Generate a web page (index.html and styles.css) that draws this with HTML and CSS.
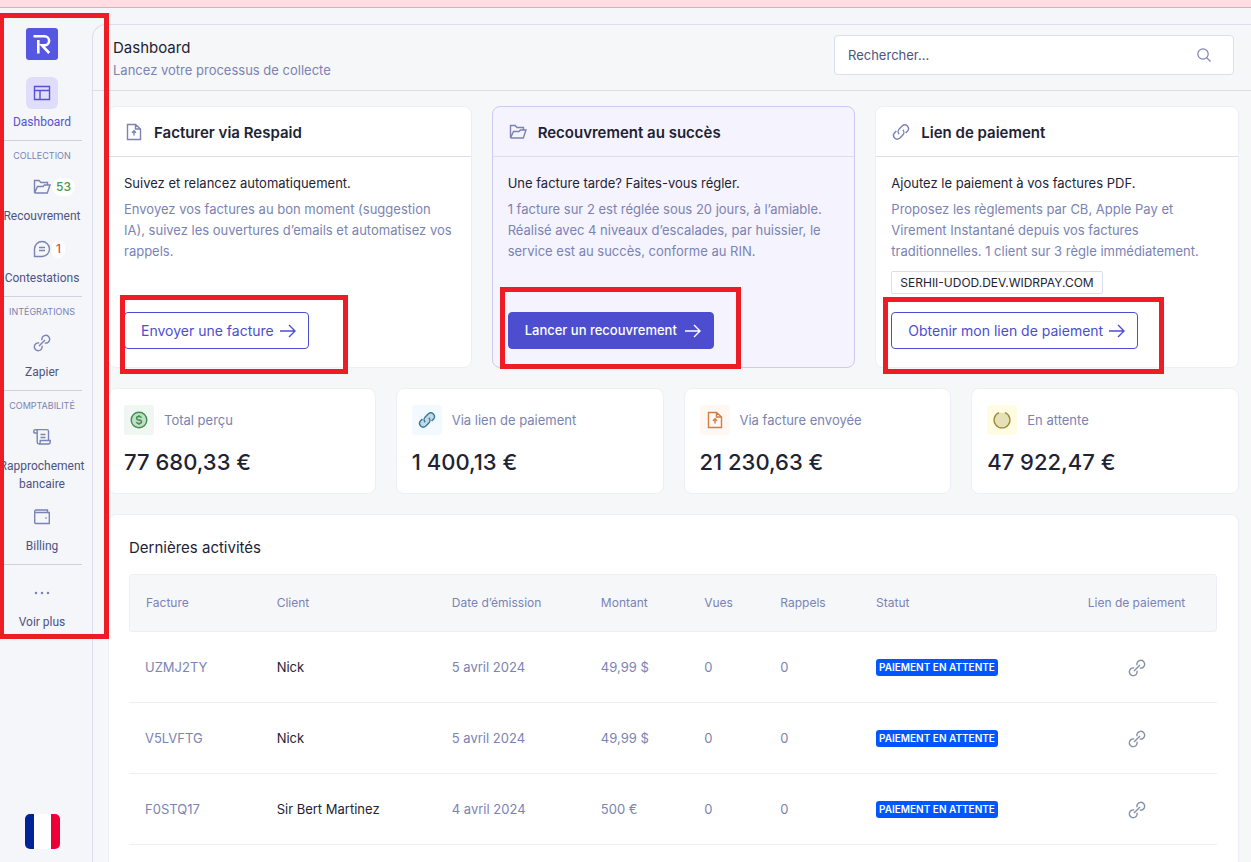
FILE: index.html
```html
<!DOCTYPE html>
<html lang="fr">
<head>
<meta charset="utf-8">
<meta name="viewport" content="width=device-width, initial-scale=1">
<title>Dashboard</title>
<link rel="stylesheet" href="styles.css">
</head>
<body>
<svg class="sprite" aria-hidden="true">
  <symbol id="i-folder" viewBox="0 0 18 16"><path d="M1.500 14V1.500H6l2 2h6.500V6M1.500 14h12.800L17 6h-5.500L10 7.500H4.500L1.500 14"/></symbol>
  <symbol id="i-doc" viewBox="0 0 18 18"><path d="M2.500 1.500h8l5 4.500V16.500h-13ZM10.500 1.500V6h5M9 12.500V8M7 9.800 9 7.800l2 2"/></symbol>
  <symbol id="i-link" viewBox="0 0 18 18"><path d="M7.200 11.200a3.700 3.700 0 0 1 0-5.200l3.200-3.200a3.700 3.700 0 0 1 5.200 5.200l-2 2M10.800 6.800a3.700 3.700 0 0 1 0 5.200l-3.200 3.200a3.700 3.700 0 0 1-5.200-5.200l2-2"/></symbol>
  <symbol id="i-chain" viewBox="0 0 18 18"><path d="M6 12l6-6M9 6.200a3.900 3.900 0 1 1 2.800 2.800M9 11.800a3.900 3.900 0 1 1-2.800-2.800"/></symbol>
  <symbol id="i-arrow" viewBox="0 0 16 14"><path d="M0 7h15M9 1l6 6-6 6"/></symbol>
</svg>
<div class="banner"></div>
<div class="app">
  <nav class="sidebar">
    <a class="logo" href="#" aria-label="Respaid">
      <svg viewBox="0 0 32 32"><path d="M7.500 8.200H18.500a4.600 4.600 0 0 1 0 9.200H16l7.200 7.600M12.300 12v13.500"/></svg>
    </a>
    <a class="item active" href="#">
      <span class="ico"><svg viewBox="0 0 18 18"><path d="M1.500 2.500h15v13h-15ZM1.500 6.500h15M7 6.500v9"/></svg></span>
      Dashboard
    </a>
    <section class="group">
      <h2>COLLECTION</h2>
      <a class="item" href="#"><span class="ico"><svg><use href="#i-folder"/></svg><b class="count green">53</b></span>Recouvrement</a>
      <a class="item" href="#"><span class="ico"><svg viewBox="0 0 18 18"><path d="M1.500 16.500V9A7.500 7.500 0 1 1 9 16.500ZM6 7.500h6M6 10.500h6"/></svg><b class="count red">1</b></span>Contestations</a>
    </section>
    <section class="group">
      <h2>INTÉGRATIONS</h2>
      <a class="item" href="#"><span class="ico"><svg><use href="#i-chain"/></svg></span>Zapier</a>
    </section>
    <section class="group">
      <h2>COMPTABILITÉ</h2>
      <a class="item" href="#"><span class="ico"><svg viewBox="0 0 18 18"><path d="M.8 5V3.500c0-2.500 3.400-2.500 3.400 0V14c0 2.500 3 2.500 3 0v-1.500h10V14c0 1.500-1 2-2 2H6M.8 5h3.400M2.600 1.600h11.200c1 0 1.700.7 1.700 1.700v9.200M7.500 6.500h5M7.500 9.500h5"/></svg></span>Rapprochement bancaire</a>
      <a class="item" href="#"><span class="ico"><svg viewBox="0 0 18 18"><path d="M14.500 4.500V2H3a1.300 1.300 0 0 0-1.300 1.300V14.500c0 .6.400 1 1 1h13.600V4.500H2.500M12.300 10h1.400"/></svg></span>Billing</a>
    </section>
    <section class="group more">
      <a class="item" href="#"><span class="ico"><svg viewBox="0 0 18 18"><path class="dots" d="M3 9h0M9 9h0M15 9h0"/></svg></span>Voir plus</a>
    </section>
    <button class="flag" aria-label="Français"></button>
    <span class="mark mark-nav"></span>
  </nav>

  <main class="page">
    <header class="top">
      <div class="heading">
        <h1>Dashboard</h1>
        <p>Lancez votre processus de collecte</p>
      </div>
      <label class="search">
        <input type="text" placeholder="Rechercher..." aria-label="Rechercher">
        <svg viewBox="0 0 14 14"><circle cx="6" cy="6" r="5.200"/><path d="M9.800 9.800 13.500 13.500"/></svg>
      </label>
    </header>

    <div class="content">
      <div class="cards">
        <article class="card">
          <h2><svg><use href="#i-doc"/></svg>Facturer via Respaid</h2>
          <div class="body">
            <h3>Suivez et relancez automatiquement.</h3>
            <p>Envoyez vos factures au bon moment (suggestion<br>IA), suivez les ouvertures d’emails et automatisez vos<br>rappels.</p>
            <div class="cta"><button class="btn">Envoyer une facture<svg><use href="#i-arrow"/></svg></button><span class="mark mark-send"></span></div>
          </div>
        </article>
        <article class="card featured">
          <h2><svg><use href="#i-folder"/></svg>Recouvrement au succès</h2>
          <div class="body">
            <h3>Une facture tarde? Faites-vous régler.</h3>
            <p>1 facture sur 2 est réglée sous 20 jours, à l’amiable.<br>Réalisé avec 4 niveaux d’escalades, par huissier, le<br>service est au succès, conforme au RIN.</p>
            <div class="cta"><button class="btn primary">Lancer un recouvrement<svg><use href="#i-arrow"/></svg></button><span class="mark mark-recover"></span></div>
          </div>
        </article>
        <article class="card">
          <h2><svg><use href="#i-link"/></svg>Lien de paiement</h2>
          <div class="body">
            <h3>Ajoutez le paiement à vos factures PDF.</h3>
            <p>Proposez les règlements par CB, Apple Pay et<br>Virement Instantané depuis vos factures<br>traditionnelles. 1 client sur 3 règle immédiatement.</p>
            <span class="chip">SERHII-UDOD.DEV.WIDRPAY.COM</span>
            <div class="cta"><button class="btn">Obtenir mon lien de paiement<svg><use href="#i-arrow"/></svg></button><span class="mark mark-link"></span></div>
          </div>
        </article>
      </div>

      <div class="stats">
        <article class="stat">
          <h2><span class="tile green"><svg viewBox="0 0 18 18"><circle cx="9" cy="9" r="7.800"/><path class="line" d="M11.500 6.800C11 5.700 10 5.500 9 5.500c-3.200 0-3.200 3.200 0 3.500 3.400.3 3.400 3.500 0 3.500-1.200 0-2.200-.4-2.600-1.500M9 4v1.500M9 12.500V14"/></svg></span>Total perçu</h2>
          <p>77 680,33 €</p>
        </article>
        <article class="stat">
          <h2><span class="tile blue"><svg><use href="#i-link"/></svg></span>Via lien de paiement</h2>
          <p>1 400,13 €</p>
        </article>
        <article class="stat">
          <h2><span class="tile orange"><svg><use href="#i-doc"/></svg></span>Via facture envoyée</h2>
          <p>21 230,63 €</p>
        </article>
        <article class="stat">
          <h2><span class="tile yellow"><svg viewBox="0 0 18 18"><path d="M6 1.700a7.900 7.900 0 1 0 6 0"/></svg></span>En attente</h2>
          <p>47 922,47 €</p>
        </article>
      </div>

      <section class="panel">
        <h2>Dernières activités</h2>
        <table>
          <colgroup><col class="c1"><col class="c2"><col class="c3"><col class="c4"><col class="c5"><col class="c6"><col class="c7"><col class="c8"></colgroup>
          <thead>
            <tr><th>Facture</th><th>Client</th><th>Date d’émission</th><th>Montant</th><th>Vues</th><th>Rappels</th><th>Statut</th><th>Lien de paiement</th></tr>
          </thead>
          <tbody>
            <tr><td>UZMJ2TY</td><td>Nick</td><td>5 avril 2024</td><td>49,99 $</td><td>0</td><td>0</td><td><span class="badge">PAIEMENT EN ATTENTE</span></td><td><a href="#" aria-label="Lien de paiement"><svg><use href="#i-chain"/></svg></a></td></tr>
            <tr><td>V5LVFTG</td><td>Nick</td><td>5 avril 2024</td><td>49,99 $</td><td>0</td><td>0</td><td><span class="badge">PAIEMENT EN ATTENTE</span></td><td><a href="#" aria-label="Lien de paiement"><svg><use href="#i-chain"/></svg></a></td></tr>
            <tr><td>F0STQ17</td><td>Sir Bert Martinez</td><td>4 avril 2024</td><td>500 €</td><td>0</td><td>0</td><td><span class="badge">PAIEMENT EN ATTENTE</span></td><td><a href="#" aria-label="Lien de paiement"><svg><use href="#i-chain"/></svg></a></td></tr>
          </tbody>
        </table>
      </section>
    </div>
  </main>
</div>
</body>
</html>
```
FILE: styles.css
```css
* { box-sizing: border-box; margin: 0; padding: 0; }

body {
  height: 100vh;
  display: flex;
  flex-direction: column;
  overflow: hidden;
  background: #f4f6fa;
  color: #1e2334;
  font: 400 13px/21px Inter, "Noto Sans", sans-serif;
}

h1, h2, h3 { font-weight: 400; }
a { color: inherit; text-decoration: none; }
button { font: inherit; cursor: pointer; }
svg { fill: none; stroke: currentColor; stroke-width: 1.4; width: 18px; height: 18px; flex: none; }
.sprite { position: absolute; width: 0; height: 0; }

.banner { flex: none; height: 8px; background: #ffdde2; border-bottom: 1px solid #d5b3bd; }
.app { flex: 1; min-height: 0; display: flex; }

/* Sidebar */
.sidebar {
  position: relative;
  flex: none;
  width: 92px;
  padding: 20px 8px 13px 0;
  display: flex;
  flex-direction: column;
}
.logo {
  align-self: center;
  display: flex;
  width: 32px;
  height: 32px;
  margin-bottom: 17px;
  border-radius: 3px;
  background: #5556e2;
  color: #fff;
}
.logo svg { width: 32px; height: 32px; stroke-width: 2.6; }
.item {
  display: flex;
  flex-direction: column;
  align-items: center;
  gap: 4px;
  font-family: Roboto, Inter, sans-serif;
  font-size: 12px;
  line-height: 18px;
  text-align: center;
  color: #4d5480;
}
.ico {
  position: relative;
  display: flex;
  align-items: center;
  justify-content: center;
  width: 32px;
  height: 32px;
  border-radius: 6px;
  color: #7a83b3;
}
.active { color: #5452d0; }
.active .ico { background: #e0ddfa; color: #5452d0; }
.dots { stroke-width: 2.5; stroke-linecap: round; }
.count {
  position: absolute;
  left: 26px;
  top: 7px;
  padding: 0 4px;
  border-radius: 9px;
  background: #fff;
  font-family: Inter, sans-serif;
  font-size: 12px;
  line-height: 18px;
  font-weight: 500;
}
.count.green { color: #45984c; }
.count.red { color: #e5484d; }
.group {
  display: flex;
  flex-direction: column;
  gap: 8px;
  margin-top: 9px;
  padding-top: 8px;
  border-top: 1px solid #cfd2dc;
  margin-right: 2px;
}
.group > * { margin-right: -2px; }
.group h2 { font-size: 9px; line-height: 14px; text-align: center; color: #7a83b3; }
.more { padding-top: 12px; }
.flag {
  align-self: center;
  width: 35px;
  height: 35px;
  margin-top: auto;
  border: 0;
  border-radius: 5px;
  background: linear-gradient(90deg, #002395 25%, #fff 25% 73%, #ed0039 73%);
}

/* Highlight frames */
.mark { position: absolute; border: 5px solid #ee1c25; pointer-events: none; z-index: 2; }
.mark-nav { left: -1px; top: 5px; width: 110px; height: 626px; }
.mark-send { left: -4px; top: -17px; width: 228px; height: 79px; }
.mark-recover { left: -8px; top: -25px; width: 241px; height: 82px; }
.mark-link { left: -8px; top: -15px; width: 281px; height: 77px; }

/* Page */
.page {
  flex: 1;
  min-width: 0;
  margin-top: 16px;
  display: flex;
  flex-direction: column;
  background: #f6f7f9;
  border: 1px solid #dddeed;
  border-width: 1px 0 0 1px;
  border-top-left-radius: 14px;
}
.top {
  display: flex;
  align-items: flex-start;
  justify-content: space-between;
  height: 66px;
  padding: 10px 17px 0 20px;
  border-bottom: 1px solid #dddeed;
}
.top h1 { font-size: 15px; line-height: 24px; }
.top p { color: #7a83b3; }
.heading { padding-top: 1px; }
.search {
  display: flex;
  align-items: center;
  width: 400px;
  height: 40px;
  padding: 0 22px 0 13px;
  border: 1px solid #dddeed;
  border-radius: 4px;
  background: #fff;
  color: #7a83b3;
}
.search input { flex: 1; border: 0; outline: 0; background: none; font: inherit; }
.search input::placeholder { color: #4d5480; opacity: 1; }
.search svg { width: 14px; height: 14px; stroke-width: 1.2; }

.content {
  flex: 1;
  min-height: 0;
  padding: 15px 12px 0 15px;
  display: flex;
  flex-direction: column;
  gap: 20px;
}
.card, .stat, .panel { background: #fff; border: 1px solid #eeeff6; border-radius: 8px; }

.cards { display: grid; grid-template-columns: repeat(3, 1fr); gap: 20px; }
.card { display: flex; flex-direction: column; min-width: 0; }
.card h2 {
  display: flex;
  align-items: center;
  gap: 11px;
  height: 50px;
  padding: 1px 0 0 16px;
  border-bottom: 1px solid #dddeed;
  font-size: 15px;
  font-weight: 600;
}
.card h2 svg { color: #7a83b3; }
.body { flex: 1; display: flex; flex-direction: column; align-items: flex-start; padding: 16px 15px 18px; }
.body h3 { font-size: 13px; margin-bottom: 5px; }
.body p { color: #7a83b3; white-space: nowrap; }
.featured { background: #f5f3fe; border-color: #cdc9f0; }
.chip {
  margin: 9px 0 18px;
  padding: 0 8px;
  border: 1px solid #dddeed;
  border-radius: 2px;
  font-size: 12px;
  line-height: 21px;
}
.cta { position: relative; margin-top: auto; }
.btn {
  display: flex;
  align-items: center;
  gap: 6px;
  height: 37px;
  padding: 0 12px 0 16px;
  border: 1px solid #4d4dcf;
  border-radius: 4px;
  background: #fff;
  color: #4d4dcf;
  font-size: 14px;
}
.btn svg { width: 16px; height: 14px; }
.primary { gap: 8px; background: #4d4dcf; color: #fff; font-size: 13px; font-weight: 500; }

.stats { display: grid; grid-template-columns: repeat(4, 1fr); gap: 20px; }
.stat { padding: 16px 15px 17px; }
.stat h2 { display: flex; align-items: center; gap: 10px; margin-bottom: 13px; font-size: 13px; color: #7a83b3; }
.stat p { font-size: 22px; line-height: 28px; font-weight: 500; }
.tile { display: flex; align-items: center; justify-content: center; width: 30px; height: 30px; border-radius: 3px; }
.tile svg { fill: color-mix(in srgb, currentColor 25%, transparent); }
.tile .line { fill: none; }
.tile.green { background: #f0f7f2; color: #3f914b; }
.tile.blue { background: #f2faff; color: #39799b; }
.tile.orange { background: #fff8f2; color: #d07c45; }
.tile.orange svg { fill: none; }
.tile.yellow { background: #fffce3; color: #9c8b35; }

/* Activity table */
.panel { flex: 1; min-height: 0; padding: 21px 21px 0 20px; border-bottom: 0; border-radius: 8px 8px 0 0; }
.panel h2 { font-size: 15px; line-height: 24px; margin-bottom: 14px; }
table { width: 100%; table-layout: fixed; border-collapse: separate; border-spacing: 0; }
.c1 { width: 12.1%; }
.c2 { width: 16.1%; }
.c3 { width: 13.7%; }
.c4 { width: 9.5%; }
.c5 { width: 7%; }
.c6 { width: 8.8%; }
.c7 { width: 18.1%; }
.c8 { width: 14.7%; }
th, td { padding: 0 16px; text-align: left; font-weight: 400; white-space: nowrap; }
th {
  height: 58px;
  padding-bottom: 2px;
  font-size: 12px;
  color: #7a83b3;
  background: #f6f7f9;
  border: 1px solid #eeeff6;
  border-width: 1px 0;
}
th:first-child { border-left-width: 1px; border-radius: 4px 0 0 4px; }
th:last-child { border-right-width: 1px; border-radius: 0 4px 4px 0; }
th:last-child, td:last-child { text-align: center; }
td { height: 71px; color: #7a83b3; border-bottom: 1px solid #eeeff6; }
td:nth-child(2) { color: #1e2334; }
td svg { vertical-align: middle; color: #8590a5; }
.badge {
  display: inline-block;
  padding: 0 3px;
  border-radius: 3px;
  background: #0057ff;
  color: #fff;
  font-size: 10px;
  line-height: 17px;
  font-weight: 600;
  vertical-align: middle;
}
```
